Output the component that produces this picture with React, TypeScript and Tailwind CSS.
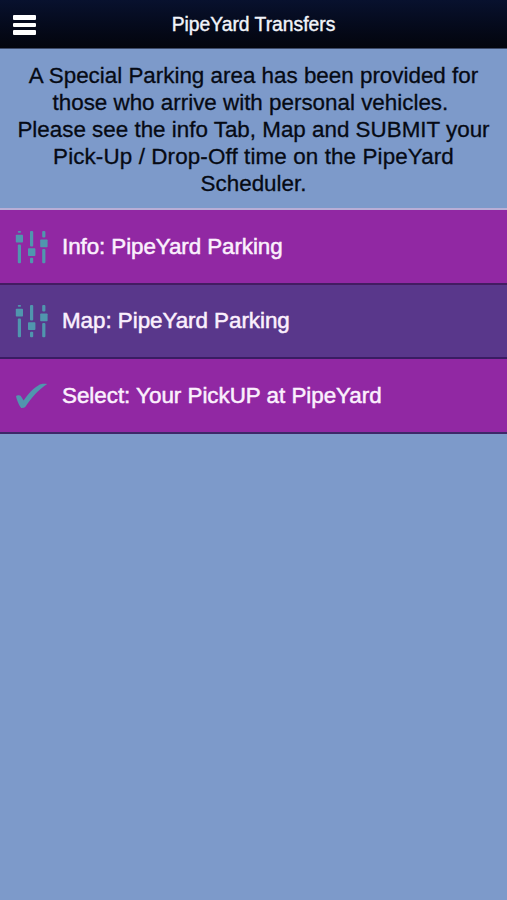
import React from "react";

const SlidersIcon = () => (
  <svg width="34" height="34" viewBox="0 0 34 34" fill="#5096ae">
    <rect x="2.8" y="1" width="3.2" height="1.8" rx="0.8" />
    <rect x="0.8" y="4.8" width="7.2" height="7.8" rx="0.8" />
    <rect x="2.8" y="14.4" width="3.2" height="18.8" rx="1" />
    <rect x="15" y="1" width="3.2" height="15.6" rx="1" />
    <rect x="13" y="18.2" width="7.4" height="7.8" rx="0.8" />
    <rect x="15" y="27.8" width="3.2" height="5.4" rx="1" />
    <rect x="27.2" y="1" width="3.2" height="6.4" rx="1" />
    <rect x="25.2" y="9.4" width="7.4" height="7.8" rx="0.8" />
    <rect x="27.2" y="19" width="3.2" height="14.2" rx="1" />
  </svg>
);

const CheckIcon = () => (
  <svg width="34" height="34" viewBox="0 0 34 34" fill="#5096ae">
    <path d="M1 17.2C1.6 16.2 4.8 15.8 5.6 16.8L8.6 21.6C13 14.8 18.6 8.8 24.8 5.4C26.6 4.5 29.8 4.6 32.2 4.9C23.4 11 16.6 18 10.6 27.6C9.6 29.4 6.2 29.4 5.2 27.8C3.2 24.4 1.8 20.8 1 17.2Z" />
  </svg>
);

const menuItems = [
  {
    label: "Info: PipeYard Parking",
    icon: <SlidersIcon />,
    className: "h-[75px] bg-[#9128a3] border-[#431c62] tracking-[-0.08px]",
  },
  {
    label: "Map: PipeYard Parking",
    icon: <SlidersIcon />,
    className: "h-[74px] bg-[#59378b] border-[#3a1c63] tracking-[-0.04px]",
  },
  {
    label: "Select: Your PickUP at PipeYard",
    icon: <CheckIcon />,
    className: "h-[75px] bg-[#9128a3] border-[#3d2868] tracking-[-0.02px]",
  },
];

function App() {
  return (
    <main className="flex flex-col w-full min-h-screen bg-[#7d9aca] font-['Liberation_Sans',Arial,sans-serif]">
      <header className="grid grid-cols-[1fr_auto_1fr] items-center h-[49px] px-[13px] bg-linear-to-b from-[#08112e] to-[#03050d] border-b border-[#3d4a68]">
        <button className="flex flex-col gap-[3px] w-[23px] pt-[2px]">
          <span className="h-[4.5px] w-full rounded-[1px] bg-white" />
          <span className="h-[4.5px] w-full rounded-[1px] bg-white" />
          <span className="h-[4.5px] w-full rounded-[1px] bg-white" />
        </button>
        <h1 className="pt-[2px] text-[19.3px] leading-6 text-[#f2f4fa] [-webkit-text-stroke:0.4px_#f2f4fa]">
          PipeYard Transfers
        </h1>
      </header>
      <p className="h-[159px] pt-[13px] text-center text-[22.4px] leading-[27px] text-[#060a14] [-webkit-text-stroke:0.3px_#060a14] whitespace-nowrap">
        A Special Parking area has been provided for
        <br />
        those who arrive with personal vehicles.&nbsp;
        <br />
        Please see the info Tab, Map and SUBMIT your
        <br />
        <span className="tracking-[0.12px]">
          Pick-Up / Drop-Off time on the PipeYard
        </span>
        <br />
        Scheduler.
      </p>
      <ul className="border-t-2 border-[#b9aed6]">
        {menuItems.map((item) => (
          <li
            key={item.label}
            className={`flex items-center gap-[13px] pl-[15px] border-b-2 text-[22.4px] text-[#fbf0fd] [-webkit-text-stroke:0.5px_#fbf0fd] ${item.className}`}
          >
            {item.icon}
            <span>{item.label}</span>
          </li>
        ))}
      </ul>
    </main>
  );
}

export default App;
